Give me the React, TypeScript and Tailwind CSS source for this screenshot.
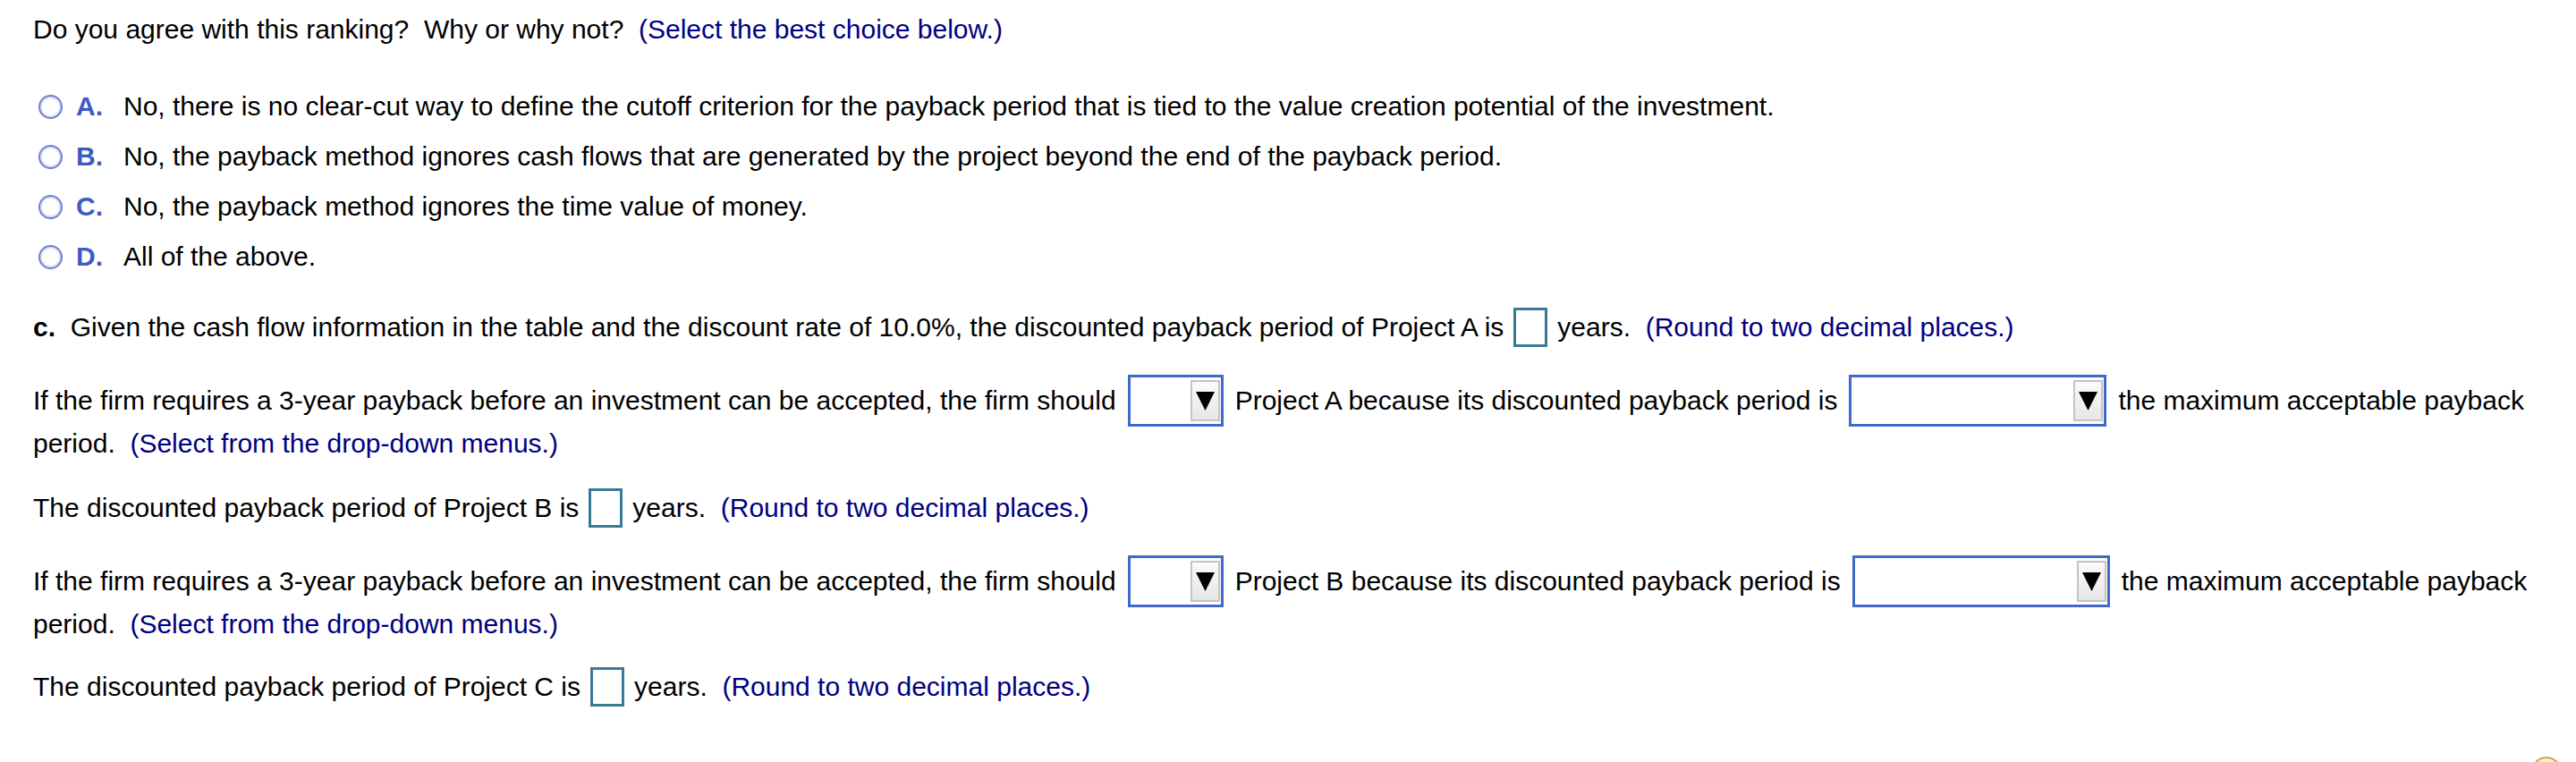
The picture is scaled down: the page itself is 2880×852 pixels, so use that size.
import React from "react";

const HINT = "text-[#000080]";

function Radio({ letter, children }: { letter: string; children: React.ReactNode }) {
  return (
    <div className="flex h-[56px] items-center">
      <div className="ml-[6px] h-[27px] w-[27px] rounded-full border-[2px] border-[#6f81d3] bg-white shadow-[inset_0_0_2px_1px_rgba(160,175,230,0.7)]" />
      <span className="ml-[15px] w-[53px] font-bold text-[#3d5bc4]">{letter}.</span>
      <span>{children}</span>
    </div>
  );
}

function Box() {
  return <span className="ml-[11px] mr-[11px] inline-block h-[44px] w-[38px] border-[3px] border-[#3a7a96] bg-white" />;
}

function Dropdown({ width }: { width: string }) {
  return (
    <div className={`mx-[13px] flex h-[58px] items-center justify-end border-[3px] border-[#4169c9] bg-white pr-[1px] ${width}`}>
      <div className="flex h-[46px] w-[33px] items-center justify-center border-[2px] border-[#c4c4c4] bg-gradient-to-b from-[#fbfbfb] to-[#e6e6e6]">
        <svg width="21" height="22" viewBox="0 0 21 22">
          <polygon points="0,1 21,1 10.5,22" fill="#000" />
        </svg>
      </div>
    </div>
  );
}

function FirmRow({ project }: { project: string }) {
  return (
    <div>
      <div className="flex h-[48px] items-center whitespace-nowrap">
        <span>If the firm requires a 3-year payback before an investment can be accepted, the firm should</span>
        <Dropdown width="w-[107px]" />
        <span>Project {project} because its discounted payback period is</span>
        <Dropdown width="w-[288px]" />
        <span>the maximum acceptable payback</span>
      </div>
      <div className="flex h-[48px] items-center whitespace-nowrap">
        <span>period.&nbsp;&nbsp;</span>
        <span className={HINT}>(Select from the drop-down menus.)</span>
      </div>
    </div>
  );
}

function PeriodLine({ project }: { project: string }) {
  return (
    <div className="flex h-[56px] items-center whitespace-nowrap">
      <span>The discounted payback period of Project {project} is</span>
      <Box />
      <span>years.&nbsp;&nbsp;</span>
      <span className={HINT}>(Round to two decimal places.)</span>
    </div>
  );
}

export default function App() {
  return (
    <div
      className="relative h-[852px] w-full overflow-hidden bg-white pl-[37px] text-[30px] leading-none text-black"
      style={{ fontFamily: '"Liberation Sans", Arial, Helvetica, sans-serif' }}
    >
      <div className="mt-[11px] flex h-[44px] items-center whitespace-nowrap">
        <span>Do you agree with this ranking?&nbsp;&nbsp;Why or why not?&nbsp;&nbsp;</span>
        <span className={HINT}>(Select the best choice below.)</span>
      </div>

      <div className="mt-[36px] whitespace-nowrap">
        <Radio letter="A">
          No, there is no clear-cut way to define the cutoff criterion for the payback period that is tied to the value creation potential of the investment.
        </Radio>
        <Radio letter="B">
          No, the payback method ignores cash flows that are generated by the project beyond the end of the payback period.
        </Radio>
        <Radio letter="C">No, the payback method ignores the time value of money.</Radio>
        <Radio letter="D">All of the above.</Radio>
      </div>

      <div className="mt-[23px] flex h-[56px] items-center whitespace-nowrap">
        <span className="font-bold">c.</span>
        <span>&nbsp;&nbsp;Given the cash flow information in the table and the discount rate of 10.0%, the discounted payback period of Project A is</span>
        <Box />
        <span>years.&nbsp;&nbsp;</span>
        <span className={HINT}>(Round to two decimal places.)</span>
      </div>

      <div className="mt-[30px]">
        <FirmRow project="A" />
      </div>

      <div className="mt-[20px]">
        <PeriodLine project="B" />
      </div>

      <div className="mt-[30px]">
        <FirmRow project="B" />
      </div>

      <div className="mt-[18px]">
        <PeriodLine project="C" />
      </div>

      <div className="absolute left-[2830px] top-[846px] h-[34px] w-[34px] rounded-full border-[2px] border-[#c9a94e] bg-[#fdf1c0]" />
    </div>
  );
}
